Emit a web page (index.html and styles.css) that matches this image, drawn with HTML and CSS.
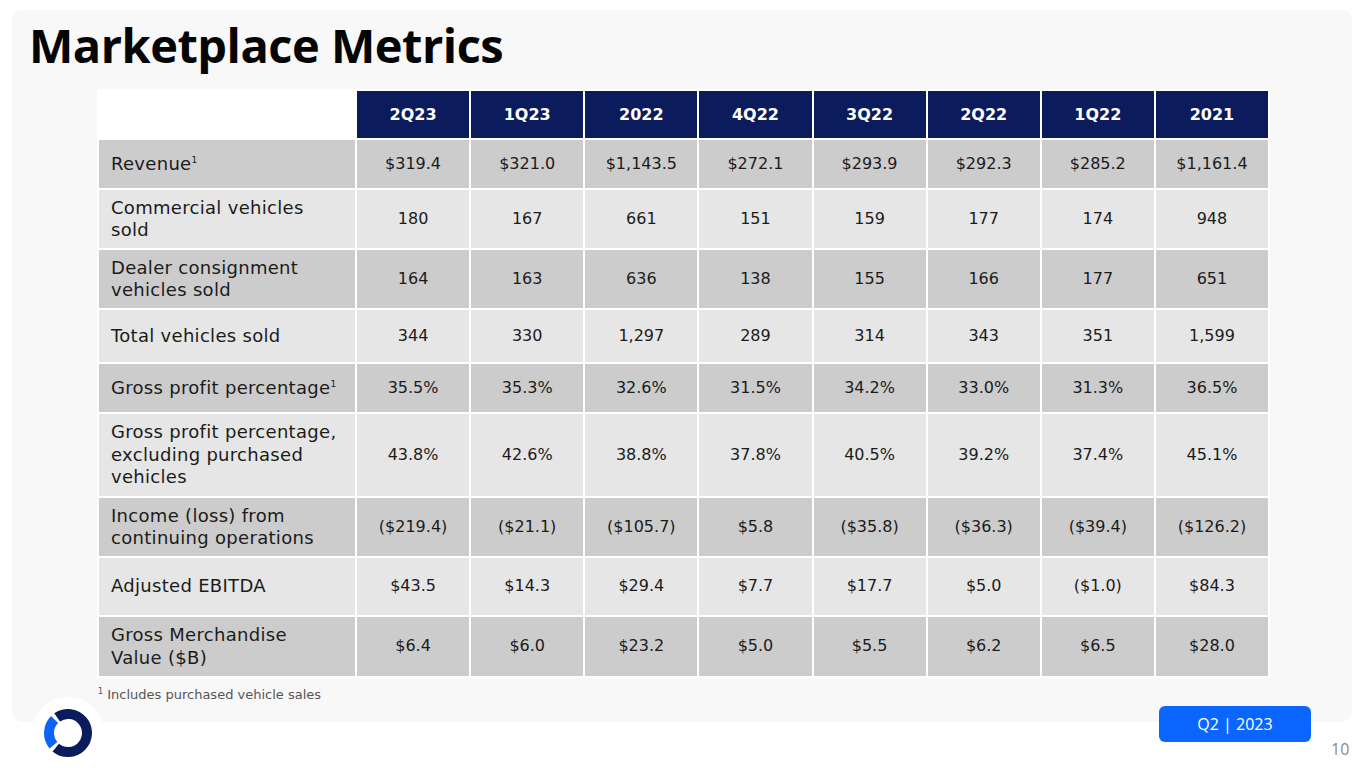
FILE: index.html
```html
<!DOCTYPE html>
<html lang="en">
<head>
<meta charset="utf-8">
<title>Marketplace Metrics</title>
<link rel="stylesheet" href="styles.css">
</head>
<body>
<div class="slide">
  <div class="panel">
    <h1 class="title">Marketplace Metrics</h1>
    <table class="metrics">
      <thead>
        <tr class="head">
          <th class="blank"></th>
          <th>2Q23</th><th>1Q23</th><th>2022</th><th>4Q22</th><th>3Q22</th><th>2Q22</th><th>1Q22</th><th>2021</th>
        </tr>
      </thead>
      <tbody>
        <tr class="dark r48">
          <td class="label">Revenue<sup>1</sup></td>
          <td>$319.4</td><td>$321.0</td><td>$1,143.5</td><td>$272.1</td><td>$293.9</td><td>$292.3</td><td>$285.2</td><td>$1,161.4</td>
        </tr>
        <tr class="light r58">
          <td class="label">Commercial vehicles<br>sold</td>
          <td>180</td><td>167</td><td>661</td><td>151</td><td>159</td><td>177</td><td>174</td><td>948</td>
        </tr>
        <tr class="dark r58">
          <td class="label">Dealer consignment<br>vehicles sold</td>
          <td>164</td><td>163</td><td>636</td><td>138</td><td>155</td><td>166</td><td>177</td><td>651</td>
        </tr>
        <tr class="light r52">
          <td class="label">Total vehicles sold</td>
          <td>344</td><td>330</td><td>1,297</td><td>289</td><td>314</td><td>343</td><td>351</td><td>1,599</td>
        </tr>
        <tr class="dark r48">
          <td class="label">Gross profit percentage<sup>1</sup></td>
          <td>35.5%</td><td>35.3%</td><td>32.6%</td><td>31.5%</td><td>34.2%</td><td>33.0%</td><td>31.3%</td><td>36.5%</td>
        </tr>
        <tr class="light r82">
          <td class="label">Gross profit percentage,<br>excluding purchased<br>vehicles</td>
          <td>43.8%</td><td>42.6%</td><td>38.8%</td><td>37.8%</td><td>40.5%</td><td>39.2%</td><td>37.4%</td><td>45.1%</td>
        </tr>
        <tr class="dark r58">
          <td class="label">Income (loss) from<br>continuing operations</td>
          <td>($219.4)</td><td>($21.1)</td><td>($105.7)</td><td>$5.8</td><td>($35.8)</td><td>($36.3)</td><td>($39.4)</td><td>($126.2)</td>
        </tr>
        <tr class="light r57">
          <td class="label">Adjusted EBITDA</td>
          <td>$43.5</td><td>$14.3</td><td>$29.4</td><td>$7.7</td><td>$17.7</td><td>$5.0</td><td>($1.0)</td><td>$84.3</td>
        </tr>
        <tr class="dark r59">
          <td class="label">Gross Merchandise<br>Value ($B)</td>
          <td>$6.4</td><td>$6.0</td><td>$23.2</td><td>$5.0</td><td>$5.5</td><td>$6.2</td><td>$6.5</td><td>$28.0</td>
        </tr>
      </tbody>
    </table>
    <p class="footnote"><sup>1</sup> Includes purchased vehicle sales</p>
  </div>

  <div class="logo">
    <svg width="48" height="48" viewBox="0 0 48 48" aria-hidden="true">
      <path d="M9.45 36.21 A19 19 0 0 1 10.57 10.57" fill="none" stroke="#0d63f5" stroke-width="10"/>
      <path d="M13.10 8.44 A19 19 0 1 1 11.79 38.55" fill="none" stroke="#0b1c5c" stroke-width="10"/>
    </svg>
  </div>

  <div class="badge">Q2 | 2023</div>
  <div class="pagenum">10</div>
</div>
</body>
</html>
```

FILE: styles.css
```css
* { box-sizing: border-box; }

html, body {
  margin: 0;
  padding: 0;
  background: #ffffff;
}

body {
  font-family: "DejaVu Sans", "Open Sans", Arial, sans-serif;
  color: #1b1b1b;
}

.slide {
  position: relative;
  width: 1365px;
  height: 768px;
  padding: 10px 13px 0 12px;
}

.panel {
  height: 712px;
  background: #f8f8f8;
  border-radius: 10px;
  padding: 3px 0 0 17px;
}

.title {
  margin: 0;
  font-family: "Open Sans", "Noto Sans", Arial, sans-serif;
  font-size: 47px;
  line-height: 64px;
  font-weight: 700;
  color: #050505;
  letter-spacing: -0.5px;
}

.metrics {
  margin: 12px 0 0 68px;
  border-collapse: separate;
  border-spacing: 2px;
  background: #ffffff;
  table-layout: fixed;
  width: 1173px;
  font-size: 16px;
}

.metrics th,
.metrics td {
  padding: 0;
  text-align: center;
  vertical-align: middle;
}

.metrics .head th {
  height: 47px;
  background: #0b1b5b;
  color: #ffffff;
  font-weight: 700;
  font-size: 16px;
}

.metrics .head th.blank {
  width: 256px;
  background: #ffffff;
}

.metrics td {
  line-height: 22.5px;
}

.metrics td.label {
  text-align: left;
  padding-left: 12px;
  font-size: 18px;
  letter-spacing: 0.3px;
}

.metrics sup {
  font-size: 9px;
  vertical-align: 7px;
  line-height: 0;
  letter-spacing: 0;
}

.dark td { background: #cccccc; }
.light td { background: #e6e6e6; }

.r48 td { height: 48px; }
.r52 td { height: 52px; }
.r57 td { height: 57px; }
.r58 td { height: 58px; }
.r59 td { height: 59px; }
.r82 td { height: 82px; }

.footnote {
  margin: 9px 0 0 69px;
  font-size: 13px;
  color: #555555;
}

.footnote sup {
  font-size: 8px;
  vertical-align: 5px;
  line-height: 0;
}

.logo {
  position: absolute;
  left: 32px;
  top: 697px;
  width: 72px;
  height: 72px;
  border-radius: 50%;
  background: #ffffff;
  display: flex;
  align-items: center;
  justify-content: center;
}

.badge {
  position: absolute;
  left: 1159px;
  top: 706px;
  width: 152px;
  height: 36px;
  border-radius: 6px;
  background: #0a66ff;
  color: #ffffff;
  font-family: "Open Sans", Arial, sans-serif;
  font-size: 16px;
  display: flex;
  align-items: center;
  justify-content: center;
}

.pagenum {
  position: absolute;
  left: 1331px;
  top: 738px;
  font-family: "Open Sans", Arial, sans-serif;
  font-size: 16px;
  color: #8a8a8a;
}
```
